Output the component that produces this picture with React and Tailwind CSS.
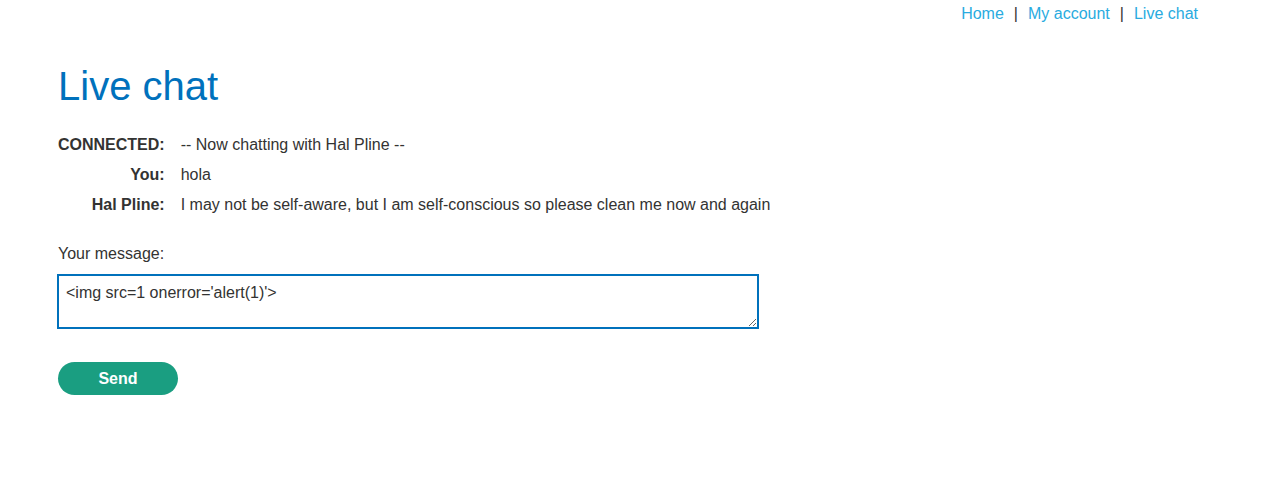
import { useState } from 'react';

const links = [
  { href: '#', label: 'Home' },
  { href: '#', label: 'My account' },
  { href: '#', label: 'Live chat' },
];

const messages = [
  { who: 'CONNECTED:', text: '-- Now chatting with Hal Pline --' },
  { who: 'You:', text: 'hola' },
  { who: 'Hal Pline:', text: 'I may not be self-aware, but I am self-conscious so please clean me now and again' },
];

export default function App() {
  const [message, setMessage] = useState("<img src=1 onerror='alert(1)'>");

  return (
    <div className="min-h-[489px] bg-white text-[16px] text-[#333332]" style={{ fontFamily: '"Liberation Sans", Arial, sans-serif' }}>
      {/* Top nav */}
      <nav className="flex justify-end pr-[82px] pt-[5px] leading-[18px]">
        {links.map((l, i) => (
          <span key={l.label} className="flex">
            {i > 0 && <span className="mx-[10px] text-[#333332]">|</span>}
            <a href={l.href} className="text-[#29abe0] hover:underline">
              {l.label}
            </a>
          </span>
        ))}
      </nav>

      <main className="px-[58px]">
        <h1 className="mt-[40px] text-[40px] leading-[46px] text-[#0071bc]">Live chat</h1>

        {/* Chat log */}
        <table className="mt-[21px] border-collapse">
          <tbody>
            {messages.map((m) => (
              <tr key={m.who}>
                <th className="py-[6px] pr-[16px] text-right align-top font-bold leading-[18px]">{m.who}</th>
                <td className="py-[6px] leading-[18px]">{m.text}</td>
              </tr>
            ))}
          </tbody>
        </table>

        {/* Form */}
        <form className="mt-[25px]" onSubmit={(e) => e.preventDefault()}>
          <label className="block leading-[18px]">Your message:</label>
          <textarea
            value={message}
            onChange={(e) => setMessage(e.target.value)}
            className="-ml-px mt-[11px] block h-[55px] w-[702px] border-2 border-[#0071bc] px-[7px] pt-[8px] pb-[6px] leading-[18px] text-[#333332] outline-none"
          />
          <button
            type="submit"
            className="mt-[33px] h-[33px] w-[120px] rounded-full bg-[#1a9e81] font-bold text-white"
          >
            Send
          </button>
        </form>
      </main>
    </div>
  );
}
